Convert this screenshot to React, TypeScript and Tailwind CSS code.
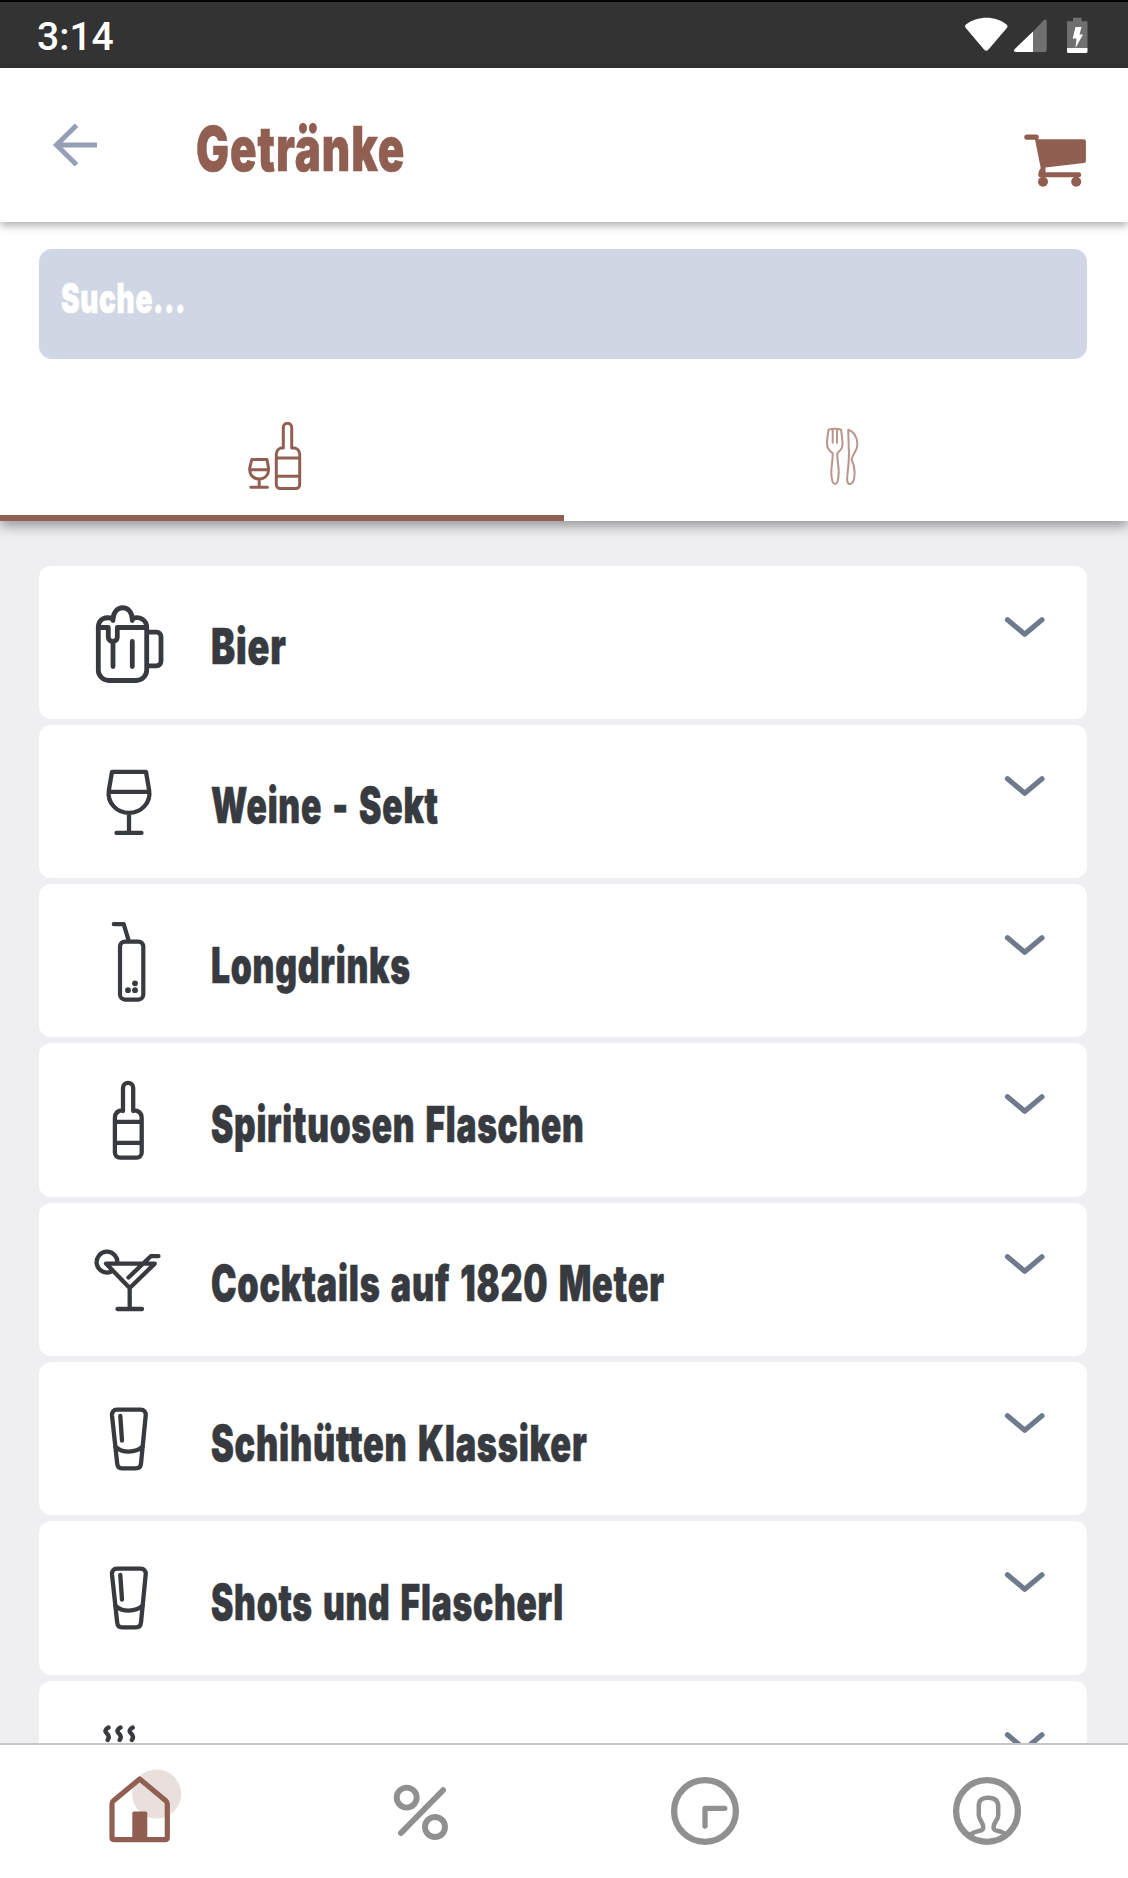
import { useLayoutEffect, useRef, useState } from 'react';
import type { ReactNode } from 'react';

type CategoryIcon = 'beer' | 'wine' | 'longdrink' | 'bottle' | 'cocktail' | 'shot' | 'hot';

const CATEGORIES: { label: string; icon: CategoryIcon; width: number }[] = [
    { label: 'Bier', icon: 'beer', width: 76 },
    { label: 'Weine - Sekt', icon: 'wine', width: 228 },
    { label: 'Longdrinks', icon: 'longdrink', width: 199.5 },
    { label: 'Spirituosen Flaschen', icon: 'bottle', width: 373.5 },
    { label: 'Cocktails auf 1820 Meter', icon: 'cocktail', width: 454 },
    { label: 'Schihütten Klassiker', icon: 'shot', width: 376.5 },
    { label: 'Shots und Flascherl', icon: 'shot', width: 353 },
    { label: '', icon: 'hot', width: 0 },
];

// Squeezes a line of text horizontally to a fixed width
function CondensedText({ width, className, children }: { width: number; className: string; children: ReactNode }) {
    const ref = useRef<HTMLSpanElement>(null);
    const [scale, setScale] = useState(1);

    useLayoutEffect(() => {
        if (ref.current && ref.current.offsetWidth > 0) {
            setScale(width / ref.current.offsetWidth);
        }
    }, [width, children]);

    return (
        <span
            ref={ref}
            className={`inline-block origin-left whitespace-nowrap font-['Inter',sans-serif] font-black tracking-[0.022em] [word-spacing:0.08em] [-webkit-text-stroke:0.6px_currentColor] ${className}`}
            style={{ transform: `scaleX(${scale})` }}
        >
            {children}
        </span>
    );
}

const ICON_PATHS: Record<CategoryIcon, ReactNode> = {
    beer: (
        <g strokeWidth="4.8">
            <path d="M8.3 31v43a10.5 10.5 0 0 0 10.5 10.5h27.4a10.5 10.5 0 0 0 10.5-10.5V31" />
            <path d="M8.3 31.5C8.3 23 15.5 20 23 22.8V24.5M23 23.5C23.5 7.8 42 7.8 42.3 23.5V24.5M42.3 22.5C50 20 56.7 24 56.7 31.5" />
            <path d="M8.3 31.5H18.3V41a4.5 4.5 0 0 0 9 0V31.5H56.7M23 46v24.5M42.3 45.5v25M58 36.2h8.5a4.5 4.5 0 0 1 4.5 4.5v24.6a4.5 4.5 0 0 1-4.5 4.5H58" />
        </g>
    ),
    wine: (
        <path
            strokeWidth="4.3"
            d="M22 16.9H56L59.2 35.5C61 48 51 57.9 39 57.9S17 48 18.8 35.5ZM19 36.9H59M39 58V77.9M26.5 77.9H51.5"
        />
    ),
    longdrink: (
        <g strokeWidth="4.2">
            <path d="M23.8 10.2H33.7L38.7 26.6" />
            <rect x="30" y="27.6" width="23.3" height="58" rx="5" />
            <g fill="#373a3f" stroke="none">
                <circle cx="45" cy="69.3" r="2.9" />
                <circle cx="38" cy="76.2" r="2.9" />
                <circle cx="45" cy="76.2" r="2.9" />
            </g>
        </g>
    ),
    bottle: (
        <path
            strokeWidth="4.3"
            d="M33 38V15a5 5 0 0 1 10.2 0V38M33 37.3C27.5 37.3 24.9 40 24.9 45V79.6a5 5 0 0 0 5 5H46.7a5 5 0 0 0 5-5V45C51.7 40 48.7 37.3 43.2 37.3M24.9 48.9H51.7M24.9 69.9H51.7"
        />
    ),
    cocktail: (
        <path
            strokeWidth="4.3"
            d="M27.3 30.6A10.4 10.4 0 1 0 20.5 38.9M16 30.6H64.8L39.7 55ZM39.7 55V76M27.5 76H52M68.5 23.2H60.8L38.5 44.5"
        />
    ),
    shot: (
        <g strokeWidth="4.3">
            <path d="M27 17.7H50.5C54.3 17.7 56 20 55.7 23.5L51 71.5C50.7 74.8 49 76.3 46 76.3H32C29 76.3 27.5 74.8 27.2 71.5L22 23.5C21.7 20 23.5 17.7 27 17.7Z" />
            <path d="M25.5 54.7C32 61.2 45.5 61.2 52.5 54.7M30.3 24L32 48.5" />
        </g>
    ),
    hot: (
        <path
            strokeWidth="4.4"
            d="M18.5 16.5Q13.4 19.3 16.8 22.3T17.7 29M30.5 16.5Q25.4 19.3 28.8 22.3T29.7 29M42.7 16.5Q37.6 19.3 41 22.3T41.9 29"
        />
    ),
};

function StatusBar() {
    return (
        <div className="flex h-[68px] shrink-0 items-center justify-between border-t-2 border-black bg-[#333333] pl-[37px] pr-[39px]">
            <span className="pt-[5px] font-['Roboto',sans-serif] text-[39px] font-medium leading-none text-white">3:14</span>
            <svg className="h-9 w-[125px]" viewBox="964 16 125 36">
                <path
                    fill="#fff"
                    d="M966 23.5C977 14.5 996 14.5 1006.5 23.5Q1008.3 25 1007 26.7L988.5 48.5Q986.3 51 984 48.5L965.6 26.7Q964.3 25 966 23.5Z"
                />
                <path fill="#707070" d="M1033 51V30.5L1043.5 19.5Q1046.7 17 1046.7 21V49Q1046.7 51 1044.5 51Z" />
                <path fill="#fff" d="M1033 30.5V51H1015.8Q1012.6 50.5 1014.8 48Z" />
                <path fill="#707070" d="M1073 16.7h8.5v3.5H1087.5V47H1067V20.2h6Z" />
                <path fill="#fff" d="M1067 47h20.5v3.5q0 1.500-1.500 1.500h-17.500q-1.500 0-1.500-1.500ZM1075.500 26h6l-2 7.500h3.500l-7.500 13.500 1-9.500h-3.800Z" />
            </svg>
        </div>
    );
}

function Header() {
    return (
        <header className="relative z-20 flex h-[153.5px] shrink-0 items-center bg-white pl-[52px] pr-10 shadow-[0_3px_9px_rgba(0,0,0,0.35)]">
            <svg className="h-[46px] w-[46px]" viewBox="52 121.7 46 46" fill="none" stroke="#959fb8" strokeWidth="5">
                <path d="M97 144.7H57M76.5 125L56.5 144.7L76.5 164.4" />
            </svg>
            <h1 className="ml-[98px] grow pt-[9px] leading-none">
                <CondensedText width={209} className="text-[62px] leading-none text-[#915f52]">
                    Getränke
                </CondensedText>
            </h1>
            <svg className="mt-8 h-[54px] w-[64px]" viewBox="1024 134 64 54" fill="#915f52">
                <rect x="1024.3" y="134.5" width="14.5" height="5.3" rx="2.5" />
                <path d="M1034.5 137L1038 139.3H1083.7Q1085.9 139.3 1085.9 141.5V161Q1085.9 162.8 1084 163L1045.5 167.5V173H1040.5V167Z" />
                <rect x="1038.5" y="172.3" width="42.7" height="5" rx="2.5" />
                <path d="M1038.5 175Q1038 170.5 1041 168.5H1045V177H1039Z" />
                <path d="M1041 176h4v4h-4ZM1074 176h4v4h-4Z" />
                <circle cx="1043" cy="181.8" r="5" />
                <circle cx="1076.2" cy="181.8" r="5" />
            </svg>
        </header>
    );
}

function Tabs() {
    return (
        <div className="grid h-[114px] w-full grid-cols-2">
            <button className="flex justify-center border-b-[6px] border-[#915f52] pr-[14px] pt-[15px]">
                <svg className="h-[70px] w-[54px]" viewBox="0 0 54 70" fill="none" stroke="#915f52" strokeWidth="3" strokeLinecap="round" strokeLinejoin="round">
                    <path d="M3.8 37.5H19L20.5 46C21 53 17 57 11.2 57S1.2 53 1.7 46ZM2 47.7H20.3M11.2 57V65.3M2.8 65.3H19.5" />
                    <path d="M35.3 26V5.5a4 4 0 0 1 8.4 0V26M35.3 25.8C31 25.8 28.3 28.5 28.3 32.5V62.5a4 4 0 0 0 4 4H47.7a4 4 0 0 0 4-4V32.5C51.7 28.5 49 25.8 44 25.8M28.3 36H51.7M28.3 54.3H51.7" />
                </svg>
            </button>
            <button className="flex justify-center pr-[8px] pt-5">
                <svg className="h-[60px] w-[34px]" viewBox="0 0 34 60" fill="none" stroke="#b9958b" strokeWidth="2" strokeLinecap="round" strokeLinejoin="round">
                    <path d="M3.5 2.6C7 1.7 13 1.7 16.1 2.6L17.4 14C18 22.5 15.5 22.5 12.3 26.3C12 34 13.9 38 13.7 45.7C13.5 53 12.8 57.1 10 57.1S6.5 53 6.3 45.7C6.2 38 8 34 7.7 26.3C4 22.5 1.6 22.5 2 14ZM7.7 2.7V15.7M12 2.7V15.7" />
                    <path d="M23.2 2.8C29 4.5 32.5 11 32.4 17.5C32.2 25 27.5 26.5 26.6 32.5C28.3 36 29.6 40 29.6 45.5C29.6 53 27.8 57 25 57C22 57 21.8 53.5 22.5 47C23.5 38 24.5 30 23.8 22Z" />
                </svg>
            </button>
        </div>
    );
}

function CategoryCard({ label, icon, width }: { label: string; icon: CategoryIcon; width: number }) {
    return (
        <li className="flex h-[153.3px] shrink-0 rounded-xl bg-white pl-[51px] pr-[40px]">
            <svg className="mt-[30px] h-24 w-[84px] shrink-0" viewBox="0 0 84 96" fill="none" stroke="#373a3f" strokeLinecap="round" strokeLinejoin="round">
                {ICON_PATHS[icon]}
            </svg>
            <div className="ml-[37px] flex grow items-center pt-[9px]">
                <CondensedText width={width} className="text-[49px] leading-none text-[#373a3f]">
                    {label}
                </CondensedText>
            </div>
            <svg className="mt-[49px] h-6 w-[44px] shrink-0" viewBox="0 0 44 24" fill="none" stroke="#6f7b8c" strokeWidth="5.2" strokeLinecap="round" strokeLinejoin="round">
                <path d="M4.5 4.8L21.7 19.3L39 4.8" />
            </svg>
        </li>
    );
}

function NavButton({ children }: { children: ReactNode }) {
    return (
        <button className="flex justify-center pt-[24px]">
            <svg className="h-[84px] w-[84px] overflow-visible" viewBox="0 0 84 84" fill="none" stroke="#909090" strokeLinecap="round" strokeLinejoin="round">
                {children}
            </svg>
        </button>
    );
}

function BottomNav() {
    return (
        <nav className="relative z-20 grid h-[135px] shrink-0 grid-cols-4 border-t-2 border-[#c6c6ca] bg-white">
            <NavButton>
                <circle cx="57.7" cy="25" r="24.5" fill="#e9dfdd" stroke="none" />
                <path d="M13 68.5V35Q13 33 14.5 31.7L40.7 10L66.8 31.7Q68.3 33 68.3 35V68.5Q68.3 70.6 66 70.6H15.3Q13 70.6 13 68.5Z" stroke="#915f52" strokeWidth="5.2" />
                <rect x="33.3" y="42.6" width="15" height="28" rx="1.5" fill="#915f52" stroke="none" />
            </NavButton>
            <NavButton>
                <g strokeWidth="5.9">
                    <circle cx="25.7" cy="28.6" r="10" />
                    <circle cx="54" cy="58" r="10" />
                    <path d="M62 21.2L20 64" />
                </g>
            </NavButton>
            <NavButton>
                <circle cx="42" cy="42" r="30.9" strokeWidth="6.3" />
                <path d="M61.8 39.3H42V57" strokeWidth="5.3" />
            </NavButton>
            <NavButton>
                <circle cx="42" cy="42" r="30.9" strokeWidth="6.3" />
                <path
                    d="M25.5 65.3C33 60 38 63.5 38.3 58.5C38.5 53.5 34 51 33.8 46.5V37C33.8 31 37 28.7 43.3 28.7S53 31 53.2 37V46.5C53 51 48.5 53.5 48.5 58.5C49 63.5 53 60 60 65"
                    strokeWidth="4.5"
                />
            </NavButton>
        </nav>
    );
}

export default function App() {
    return (
        <div className="flex h-[1878px] w-[1128px] flex-col overflow-hidden bg-[#efeef3]">
            <StatusBar />
            <Header />
            <section className="relative z-10 flex h-[299.5px] shrink-0 flex-col justify-between bg-white pt-[27.5px] shadow-[0_5px_12px_rgba(0,0,0,0.38)]">
                <div className="ml-[39px] mr-[41px] flex h-[109.5px] items-center rounded-[13px] bg-[#d0d6e3] pb-[11px] pl-[22px]">
                    <CondensedText width={125} className="text-[41px] leading-none text-white">
                        Suche...
                    </CondensedText>
                </div>
                <Tabs />
            </section>
            <ul className="ml-[39px] mr-[41px] flex min-h-0 grow flex-col gap-[6px] overflow-hidden pt-[44.5px]">
                {CATEGORIES.map((category) => (
                    <CategoryCard key={category.icon + category.label} {...category} />
                ))}
            </ul>
            <BottomNav />
        </div>
    );
}
